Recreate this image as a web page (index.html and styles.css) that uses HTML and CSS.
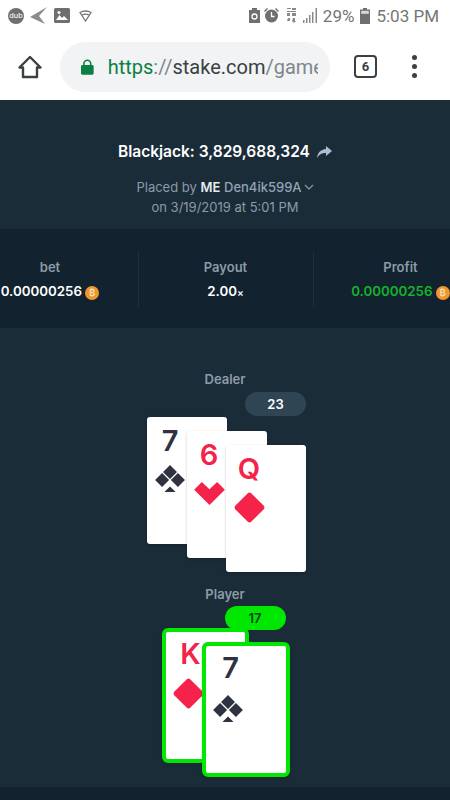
FILE: index.html
```html
<!DOCTYPE html>
<html>
<head>
   <meta charset="utf-8">
   <meta name="viewport" content="width=device-width, initial-scale=1">
   <title>Blackjack bet</title>
   <link rel="stylesheet" href="styles.css">
</head>
<body>
   <div class="status">
      <div class="status-left">
         <span class="dub">dub</span>
         <svg width="18" height="18" viewBox="0 0 18 18"><path d="M17 0L0 10l15 7-6-8z" fill="#8c8c8c"/></svg>
         <svg width="16" height="15" viewBox="0 0 16 15"><path d="M0 1.500A1.500 1.500 0 0 1 1.500 0h13A1.500 1.500 0 0 1 16 1.500v12a1.500 1.500 0 0 1-1.500 1.500h-13A1.500 1.500 0 0 1 0 13.500z" fill="#6f6f6f"/><path d="M2 12l3.500-5 2.500 3 2-2 4 4z" fill="#fff"/><circle cx="5" cy="4.500" r="1.500" fill="#fff"/></svg>
         <svg class="wifi" width="13" height="12" viewBox="0 0 13 12" fill="none" stroke="#757575" stroke-width="1.300"><path d="M1 2.500c3-2 8-2 11 0L6.500 11z"/><path d="M3 5c2-1 5-1 7 0"/></svg>
      </div>
      <div class="status-right">
         <svg width="11" height="15" viewBox="0 0 11 15"><path d="M3 0h5v2h3v13H0V2h3z" fill="#6f6f6f"/><circle cx="5.500" cy="8.500" r="2.500" fill="none" stroke="#fff" stroke-width="1.300"/></svg>
         <svg class="alarm" width="15" height="15" viewBox="0 0 15 15"><circle cx="7.500" cy="8" r="6.500" fill="#6f6f6f"/><path d="M7.500 4v4.500h3" fill="none" stroke="#fff" stroke-width="1.300"/><path d="M0 3l3-3 1 1-3 3zM15 3l-3-3-1 1 3 3z" fill="#6f6f6f"/></svg>
         <svg class="data" width="9" height="15" viewBox="0 0 9 15" fill="#8a8a8a"><path d="M0 0h4v1H0zM5 0h4v2H5zM0 3h9v1H0zM0 5h3v3H0zM5 5h4v3H5zM1 10h2v3H0zM6 10h2v3l1 0-2 2-2-2z"/></svg>
         <svg class="signal" width="15" height="15" viewBox="0 0 15 15" fill="#8a8a8a"><path d="M0 12h1.500v3H0zM3 10h1.500v5H3zM6 7h1.500v8H6zM9 4h1.500v11H9zM12.500 0H14v15h-1.500z"/></svg>
         <span class="pct">29%</span>
         <svg class="batt" width="10" height="16" viewBox="0 0 10 16"><path d="M3 0h4v1.500h3V16H0V1.500h3z" fill="#6f6f6f"/><path d="M1.200 2.800h7.600v3H1.200z" fill="#d8d8d8"/></svg>
         <span class="clock">5:03 PM</span>
      </div>
   </div>

   <div class="toolbar">
      <svg class="home" width="24" height="24" viewBox="0 0 24 24" fill="none" stroke="#3c4043" stroke-width="2.400" stroke-linejoin="round"><path d="M1.500 12.500L12 2l10.500 10.500h-3.500V22H5v-9.500z"/></svg>
      <div class="url">
         <svg width="13" height="16" viewBox="0 0 13 16"><path d="M3 7V4.500a3.500 3.500 0 0 1 7 0V7" fill="none" stroke="#0b8043" stroke-width="1.600"/><rect y="6" width="13" height="10" rx="1.500" fill="#0b8043"/></svg>
         <div class="url-text"><span class="https">https</span><span class="slashes">://</span><span class="host">stake.com</span><span class="slashes">/game</span></div>
      </div>
      <div class="tabs">6</div>
      <div class="dots"><i></i><i></i><i></i></div>
   </div>

   <div class="page">
      <div class="title"><span>Blackjack: 3,829,688,324</span><svg width="15" height="12" viewBox="0 0 15 12"><path d="M9 0l6 5-6 5V7C5 7 2.500 8 0 12c.5-5 3.500-8.500 9-9z" fill="#b1bad3"/></svg></div>
      <div class="placed">Placed by <b>ME</b> <span class="user">Den4ik599A</span><svg width="10" height="6" viewBox="0 0 10 6" fill="none" stroke="#7f8ea0" stroke-width="1.400"><path d="M1 1l4 4 4-4"/></svg></div>
      <div class="placed">on 3/19/2019 at 5:01 PM</div>

      <div class="stats">
         <div class="stat">
            <div class="stat-label">bet</div>
            <div class="stat-value">0.00000256 <span class="btc">₿</span></div>
         </div>
         <div class="stat">
            <div class="stat-label">Payout</div>
            <div class="stat-value">2.00<small>×</small></div>
         </div>
         <div class="stat">
            <div class="stat-label">Profit</div>
            <div class="stat-value green">0.00000256 <span class="btc">₿</span></div>
         </div>
      </div>

      <div class="hand-label dealer-label">Dealer</div>
      <div class="hand dealer">
         <div class="pill">23</div>
         <div class="card c1">
            <div class="rank">7</div>
            <svg class="suit" width="30" height="28" viewBox="0 0 32 30" fill="#2f3241"><path d="M16 0l7.500 7.500L16 15 8.500 7.500zM7.500 8.500L15 16l-7.500 7.500L0 16zM24.500 8.500L32 16l-7.500 7.500L17 16zM16 23l6 6H10z"/></svg>
         </div>
         <div class="card c2 red">
            <div class="rank">6</div>
            <svg class="suit" width="31" height="23" viewBox="0 0 32 24" fill="#f5234a"><path d="M8 0l8 7.500L24 0l8 8-16 16L0 8z"/></svg>
         </div>
         <div class="card c3 red">
            <div class="rank">Q</div>
            <svg class="suit" width="31" height="31" viewBox="0 0 32 32" fill="#f5234a"><path d="M14 1.500a3 3 0 0 1 4 0l12.500 12.500a3 3 0 0 1 0 4L18 30.500a3 3 0 0 1-4 0L1.500 18a3 3 0 0 1 0-4z"/></svg>
         </div>
      </div>

      <div class="hand-label">Player</div>
      <div class="hand player">
         <div class="pill win">17</div>
         <div class="card c1 red">
            <div class="rank">K</div>
            <svg class="suit" width="31" height="31" viewBox="0 0 32 32" fill="#f5234a"><path d="M14 1.500a3 3 0 0 1 4 0l12.500 12.500a3 3 0 0 1 0 4L18 30.500a3 3 0 0 1-4 0L1.500 18a3 3 0 0 1 0-4z"/></svg>
         </div>
         <div class="card c2">
            <div class="rank">7</div>
            <svg class="suit" width="30" height="28" viewBox="0 0 32 30" fill="#2f3241"><path d="M16 0l7.500 7.500L16 15 8.500 7.500zM7.500 8.500L15 16l-7.500 7.500L0 16zM24.500 8.500L32 16l-7.500 7.500L17 16zM16 23l6 6H10z"/></svg>
         </div>
      </div>
   </div>
   <div class="bottom"></div>
</body>
</html>
```

FILE: styles.css
```css
html, body {
   margin: 0;
   height: 800px;
   overflow: hidden;
}

body {
   width: 450px;
   background: #1a2c38;
   font-family: "Inter", "Liberation Sans", sans-serif;
   display: flex;
   flex-direction: column;
}

.status {
   height: 33px;
   flex: none;
   background: #fff;
   display: flex;
   justify-content: space-between;
   align-items: center;
   padding: 0 11px 2px 8px;
   box-sizing: border-box;
}

.status-left, .status-right {
   display: flex;
   align-items: center;
}

.status-left svg { margin-left: 6px; }
.status-left .wifi { margin-left: 9px; }

.dub {
   width: 16px;
   height: 16px;
   border-radius: 50%;
   background: #6f6f6f;
   color: #fff;
   font: 8px/16px "Roboto", sans-serif;
   text-align: center;
}

.status-right { color: #757575; font-family: "Roboto", sans-serif; font-size: 17px; }
.status-right .alarm { margin-left: 4px; }
.status-right .data { margin-left: 8px; }
.status-right .signal { margin-left: 7px; }
.pct { margin-left: 5px; }
.batt { margin-left: 6px; }
.clock { margin-left: 6px; }

.toolbar {
   height: 67px;
   flex: none;
   background: #fff;
   display: flex;
   align-items: center;
   box-sizing: border-box;
}

.home { margin-left: 18px; flex: none; }

.url {
   margin-left: 18px;
   width: 270px;
   height: 50px;
   flex: none;
   background: #f1f3f4;
   border-radius: 25px;
   display: flex;
   align-items: center;
   padding-left: 21px;
   padding-right: 12px;
   box-sizing: border-box;
}

.url-text {
   margin-left: 14px;
   font: 20px "Roboto", sans-serif;
   white-space: nowrap;
   overflow: hidden;
}

.https { color: #0b8043; }
.slashes { color: #80868b; }
.host { color: #3c4043; }

.tabs {
   margin-left: 24px;
   width: 19px;
   height: 19px;
   border: 2.500px solid #3c4043;
   border-radius: 4px;
   color: #3c4043;
   font: 700 13px/19px "Roboto", sans-serif;
   text-align: center;
   flex: none;
}

.dots {
   margin-left: 35px;
   display: flex;
   flex-direction: column;
   gap: 4px;
}

.dots i {
   width: 5px;
   height: 5px;
   border-radius: 50%;
   background: #3c4043;
}

.page {
   flex: 1;
   display: flex;
   flex-direction: column;
   align-items: center;
}

.title {
   margin-top: 42px;
   height: 20px;
   color: #fff;
   font-size: 15.500px;
   font-weight: 600;
   line-height: 20px;
   display: flex;
   align-items: center;
   gap: 7px;
   white-space: nowrap;
}

.placed {
   color: #8d9aa8;
   font-size: 13px;
   line-height: 20px;
}

.title + .placed { margin-top: 15px; }
.placed b { color: #e8ecef; font-weight: 600; }
.placed .user { color: #93a3b5; font-weight: 500; }
.placed svg { margin-left: 2px; vertical-align: 2px; }

.stats {
   margin-top: 12px;
   width: 450px;
   height: 99px;
   background: #12222e;
   display: flex;
   justify-content: center;
   align-items: center;
   flex: none;
}

.stat {
   width: 175px;
   height: 56px;
   flex: none;
   border-left: 1px solid #1c2f3c;
   box-sizing: border-box;
   text-align: center;
}

.stat:first-child { border-left: 0; }

.stat-label {
   color: #8d9aa8;
   font-size: 13px;
   font-weight: 600;
   line-height: 18px;
   margin-top: 7px;
}

.stat-value {
   margin-top: 6px;
   color: #fff;
   font-size: 13.300px;
   font-weight: 600;
   line-height: 18px;
   white-space: nowrap;
}

.stat-value small { font-size: 10px; }
.green { color: #15b32a; }

.btc {
   display: inline-block;
   width: 14px;
   height: 14px;
   border-radius: 50%;
   background: #f0962e;
   color: #fde3c0;
   font-size: 9px;
   line-height: 14px;
   vertical-align: 0;
}

.hand-label {
   color: #8d9aa8;
   font-size: 13px;
   font-weight: 600;
   line-height: 18px;
}

.dealer-label { margin-top: 42px; }

.hand {
   position: relative;
   width: 159px;
   margin-left: 3px;
}

.dealer { height: 180px; margin-top: 4px; margin-bottom: 13px; }
.player { height: 170px; margin-top: 4px; width: 127px; margin-left: 0; }

.pill {
   position: absolute;
   right: 0;
   top: 0;
   width: 61px;
   height: 24px;
   border-radius: 12px;
   background: #2f4553;
   color: #fff;
   font-size: 13px;
   font-weight: 600;
   line-height: 24px;
   text-align: center;
   z-index: 2;
}

.pill.win {
   right: 3px;
   top: -1px;
   background: #00e701;
   color: #0f3d1a;
}

.card {
   position: absolute;
   width: 80px;
   height: 127px;
   background: #fff;
   border-radius: 3px;
   box-sizing: border-box;
   padding: 13px 0 0 8px;
   color: #2f3241;
   box-shadow: 0 1px 3px rgba(0, 0, 0, 0.2);
}

.card.red { color: #f5234a; }

.rank {
   font-size: 29px;
   font-weight: 600;
   line-height: 22px;
   height: 22px;
   width: 30px;
   text-align: center;
}

.suit { display: block; margin-top: 13px; }

.dealer .c1 { left: 0; top: 25px; }
.dealer .c2 { left: 40px; top: 39px; }
.dealer .c3 { left: 79px; top: 53px; }
.dealer .c2 { padding-left: 7px; }
.dealer .c2 .suit { margin-top: 16px; }
.dealer .c3 .suit { margin-top: 12px; }

.player .card {
   width: 87px;
   height: 135px;
   border: 4px solid #00e701;
   border-radius: 6px;
   padding: 11px 0 0 7px;
}

.player .rank { margin-left: 3px; }
.player .c1 { left: 0; top: 21px; }
.player .c2 { left: 40px; top: 35px; width: 88px; }
.player .c2 .suit { margin-top: 16px; }

.bottom {
   height: 13px;
   flex: none;
   background: #12222e;
}
```
